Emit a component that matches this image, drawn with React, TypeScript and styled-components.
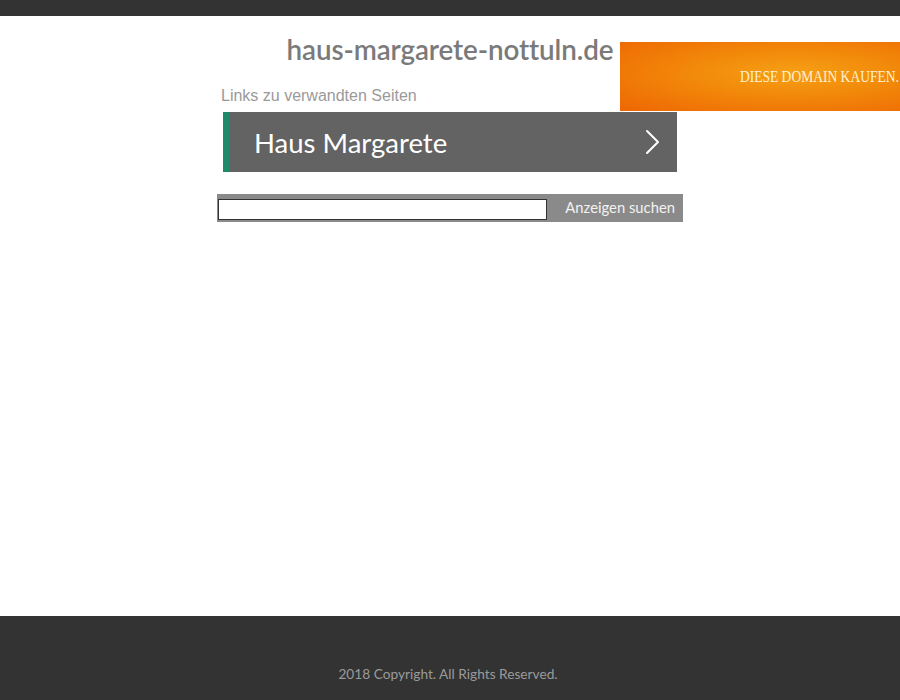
import styled, { createGlobalStyle } from "styled-components";

const GlobalStyle = createGlobalStyle`
  html, body {
    margin: 0;
    padding: 0;
    background: #fff;
    font-family: "Lato", "Open Sans", sans-serif;
  }
  * {
    box-sizing: border-box;
  }
`;

const Page = styled.div`
  position: relative;
  display: flex;
  flex-direction: column;
  height: 700px;
  overflow: hidden;
`;

const TopBar = styled.div`
  height: 16px;
  background: #333;
`;

const Main = styled.main`
  flex: 1;
  display: flex;
  justify-content: center;
`;

const Container = styled.div`
  width: 466px;
  display: flex;
  flex-direction: column;
  padding-top: 18px;
`;

const Title = styled.h1`
  margin: 0;
  text-align: center;
  font-family: "Lato", sans-serif;
  font-weight: 600;
  font-size: 27.8px;
  letter-spacing: -0.1px;
  color: #7a7a7a;
  line-height: 32px;
`;

const Subtitle = styled.div`
  margin: 20px 0 0 4px;
  font-family: "Liberation Sans", Arial, sans-serif;
  font-size: 16px;
  color: #9a9a9a;
  line-height: 20px;
`;

const LinkItem = styled.a`
  margin: 6px 6px 0 6px;
  height: 60px;
  display: flex;
  align-items: center;
  justify-content: space-between;
  background: #636363;
  border-left: 7px solid #1f8a6a;
  padding: 0 16px 0 24px;
  color: #fff;
  text-decoration: none;
  font-family: "Lato", sans-serif;
  font-size: 27.5px;
  cursor: pointer;
`;

const SearchBar = styled.form`
  margin-top: 22px;
  height: 28px;
  display: flex;
  align-items: center;
  background: #8a8a8a;
  padding: 5px 0 2px 1px;
`;

const SearchInput = styled.input`
  width: 329px;
  height: 21px;
  border: 1px solid #333;
  background: #fff;
  padding: 0 4px;
  outline: none;
`;

const SearchButton = styled.button`
  flex: 1;
  height: 21px;
  border: none;
  background: transparent;
  color: #f2f2f2;
  font-family: "Lato", sans-serif;
  font-size: 14.8px;
  line-height: 17px;
  text-align: right;
  padding: 0 8px 4px 0;
  cursor: pointer;
`;

const Banner = styled.a`
  position: absolute;
  top: 42px;
  right: 0;
  width: 280px;
  height: 69px;
  display: flex;
  align-items: center;
  justify-content: flex-end;
  overflow: hidden;
  white-space: nowrap;
  background: radial-gradient(ellipse at 62% 45%, #f6a015 0%, #f28a0a 40%, #ee6603 100%);
  text-decoration: none;
  padding-right: 1px;
`;

const BannerText = styled.span`
  display: inline-block;
  color: #fff0cf;
  font-family: "Liberation Serif", "DejaVu Serif", serif;
  font-size: 16.5px;
  transform: scaleX(0.82);
  transform-origin: right center;
`;

const Footer = styled.footer`
  height: 84px;
  background: #333;
  display: flex;
  justify-content: center;
  align-items: flex-end;
  padding: 0 0 18px 0;
`;

const Copyright = styled.p`
  margin: 0 4px 0 0;
  color: #9a9a9a;
  font-family: "Lato", sans-serif;
  font-size: 13.7px;
`;

const Chevron = () => (
  <svg width="16" height="26" viewBox="0 0 16 26" fill="none">
    <path d="M2 2 L13 13 L2 24" stroke="#fff" strokeWidth="2" strokeLinecap="round" strokeLinejoin="round" />
  </svg>
);

export default function App() {
  return (
    <>
      <GlobalStyle />
      <Page>
        <TopBar />
        <Main>
          <Container>
            <Title>haus-margarete-nottuln.de</Title>
            <Subtitle>Links zu verwandten Seiten</Subtitle>
            <LinkItem>
              <span>Haus Margarete</span>
              <Chevron />
            </LinkItem>
            <SearchBar onSubmit={(e) => e.preventDefault()}>
              <SearchInput type="text" />
              <SearchButton type="submit">Anzeigen suchen</SearchButton>
            </SearchBar>
          </Container>
        </Main>
        <Banner>
          <BannerText>DIESE DOMAIN KAUFEN.</BannerText>
        </Banner>
        <Footer>
          <Copyright>2018 Copyright. All Rights Reserved.</Copyright>
        </Footer>
      </Page>
    </>
  );
}
